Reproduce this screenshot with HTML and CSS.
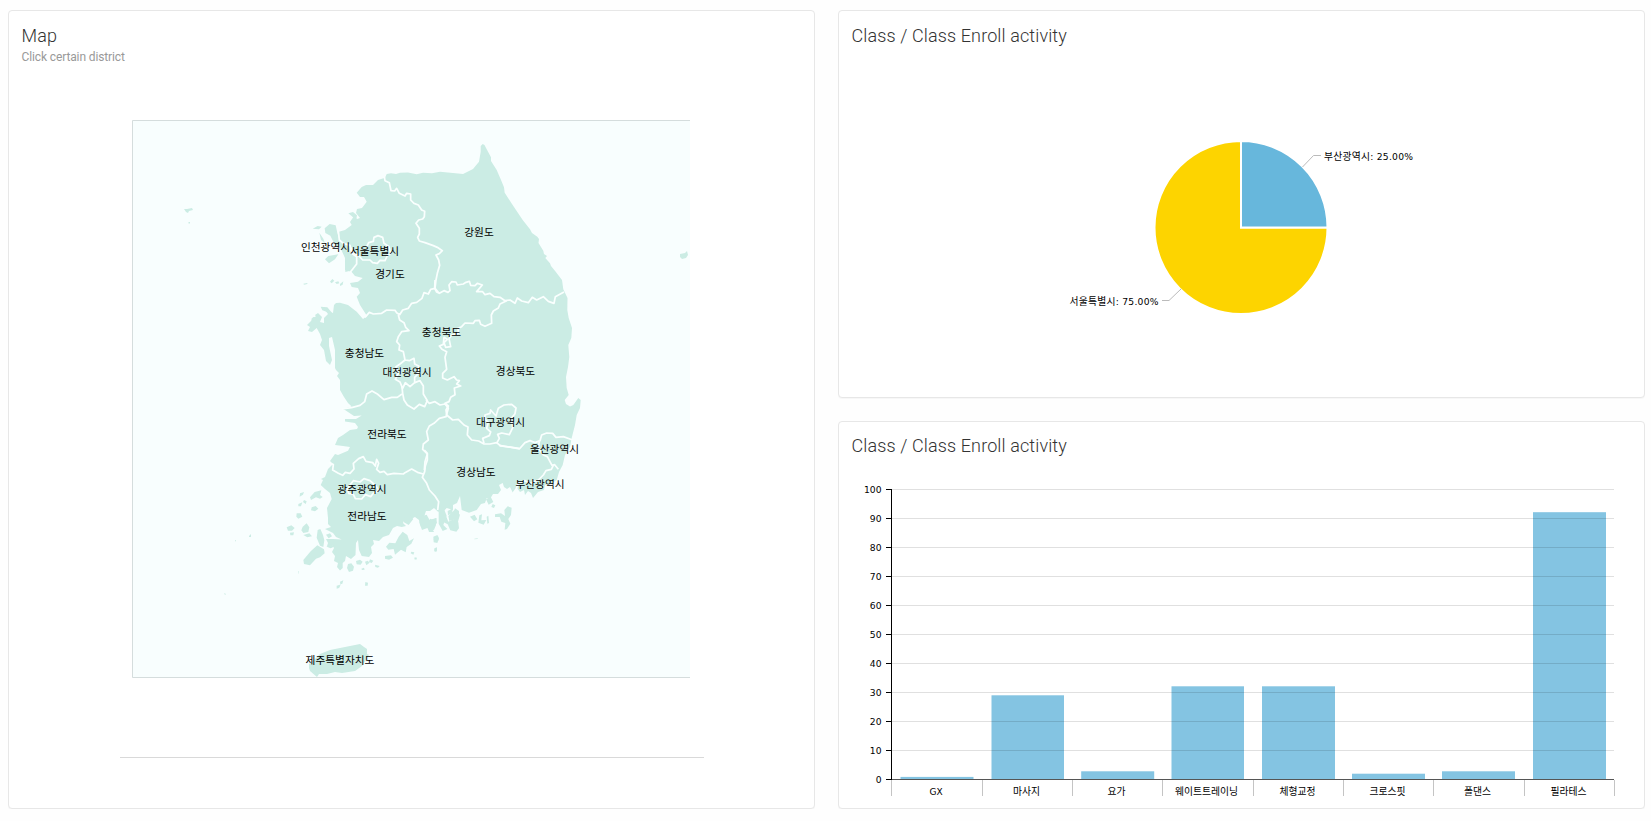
FILE: index.html
```html
<!DOCTYPE html>
<html lang="ko">
<head>
<meta charset="utf-8">
<title>Class activity</title>
<link rel="stylesheet" href="styles.css">
</head>
<body>
<main class="dashboard">
  <section class="card card-map">
    <header class="card-header">
      <h2 class="card-title">Map</h2>
      <p class="card-subtitle">Click certain district</p>
    </header>
    <div class="map-holder">
      <svg class="map" viewBox="132 120 558 558" width="558" height="558">
        <rect class="sea" x="132" y="120" width="558" height="558"/>
        <!-- mainland -->
        <path class="land" d="M482.7 144L484.500 145L486.700 149.300L491 157.300L491 161L496.700 170L500.700 179.300L504 187.300L504.700 192.700L510.700 202L512 204L516 210L522.700 220L530 229.300L532 233L537.300 236.700L539 239L538.500 243L543.300 250.700L544 254L547 256L545.300 258L550 263.300L551 266L555.300 271.300L562 280L563.300 289.300L567.500 298L567.300 310L568.700 318L572 328L571.300 338L568.300 345L569.300 357L568 367L566 377L566.700 388L568.700 395L564.700 400L566 404L570 406.500L573.300 405L578.300 398L580.700 400L580 408L576.700 415L575 425L571.700 438L570 447L565 455L562.700 465L559 472L556.700 480L552 483L545 485L544 490L538 492L533 498L531 493L528 491L525 495L524 490L520 492L517 488L513 493L510 487L507 489L504 487L502.700 483L499 485L501 490L498 494L493 494L490 499L486.700 498L485 503L481 504L476.700 510L469 512.700L461.700 510L460 496L457 503L453 505L453 510L446.700 508L443 512L438 511.700L434 508L430 511L426 511L424 517L430 520L436 518L437 523L432 528L434 532L429 532L427 526L421 527L419 520L415 517L409 520L405 519L403 523L406 526L401.700 527L397 526L393 528L389 535L383 537L379 541L373 540L374 544L371 547L372 553L369 557L361.700 556L359 550L358 540L356 543L355.500 555L351 559L346 556L345 561L342.700 563L342.700 568L340 570.500L337 567L338 563L334 561L335 556L332 552L334 548L332 545L326.700 547L328 543L326 539L333 539L341.700 539.500L336 537L333 533L325 529L331 527L328 524L328 518L327 508L331.700 499L330 493L325 489L320.700 485L323 480L321 479L325 477L328 469L333 464L330 461L335 454L338 455L348 450.700L350 447L343 446L335 445L338 438L343 435L350 430L357 429L358 427L355 423L345 421.500L345 419L356 419L361.700 415.500L354 416L345 410L343 409L351.700 406.500L348 403L344 397L340 390L340 380L337 376L339 373L336 370L335 368L335 350L332 337L329 338L329 346L332 360L330 365L326 361L324 350L320 345L322 340L320 334L316.700 328L312 332L308 331L310 327L307 325L311 321L313 317L317 318L315 315L318 313L322 317L320 322L324 323L324 318L328 314L325 310L333 313L334 305L336 303L340 302.700L348 305L356.700 311.700L363 319L367 316L360 305L356.700 296.700L360 293L358 288L351.700 287L350 283L358 281.700L362.700 278L355 276L351.700 272L345 270L345 258L340 247L338 232L345 230L351.700 225L350 222L354 216L357 219L360 218L356 213L357 209L362 208L366.700 201.700L364 197L360 197L356.700 192.700L361.700 187L366 185L373 185L378 180L385 177.700L386.700 174L391 173.300L396 174L400 172.700L408 172.600L416.700 174.300L423 172.700L432 173.200L440 171.700L453 173L463 174L473 169L479 161.700L480.700 151.700L480.700 146Z"/>
        <!-- Jeju -->
        <path class="land" d="M309 668L309 664L316 658L320 654L330 650L345 647L360 644L364 647L367 649L367 654L369 655L362 666L355 671L342 673L335 672L327 674L319 674L317 677L310 671Z"/>
        <!-- western islands -->
        <path class="land" d="M184 209l3 0 5-1 1 2-4 1-1 2-2-1zM188.500 222l1.500 0 0 1.500-1.500 0zM680 254l5-1 2-2 1 4-2 3-4 1-2-2z"/>
        <g class="land" transform="translate(290 130) scale(.33333)">
          <path d="M68 296l15-8 12 2-8 8zM88 308l12 18 5 14-12-10zM104 295l15-13 18 4 5 22 6 20 3 28-18-15-12-24-15-8zM105 388l10-10 30-5-10 15-18 12zM165 398l3-24 14-22 16 20 4 26-14 22-22 6zM120 455l7-8 6 5-8 8zM135 457l10-3 3 6-8 2zM150 462l10-8-2 10-8 4zM40 461l12-2 0 3-10 2zM92 530l20 2 15 18-10-2-20-7zM63 567l15-8 15 1-5 10-15 2zM175 250l14-4 12 10-2 12-10-6z"/>
        </g>
        <!-- south-western islands -->
        <g class="land" transform="translate(270 430) scale(.33333)">
          <path d="M90 190l12-4-3 8-10 6zM120 202l14-16 20-5-4 14 8 6-8 5-12-4-15 8zM102 210l8 4-3 8-8-6zM85 222l12-5-4 12-8 0zM125 232l12-4 8 8-10 8-12-3zM80 250l12 0 5 10-12 6-6-6zM98 290l12-10 8 12-3 14-15 3-6-8zM50 292l14-6 10 8-8 8-12 0zM100 315l18-5 8 9-14 3zM60 308l12-1-2 9-9 0zM143 300l8-3 8 18 4 16-3 20-10-4-10-24zM168 314l12-4 6 9-10 6zM170 350l14-8 8 8-10 5zM100 390l22-26 20-18 20 12 2 12-14 12-12 4-18 20-18-4zM234 402l10-2 8 10-3 12-12 4-6-12zM258 393l12-4 8 6-6 9-12-1zM285 395l8-3 6 6-10 8zM300 388l10 4-5 7-8-3zM274 416l8-3 2 6-8 1zM315 404l14 4-5 5-8-2zM345 378l18-2 6 7-12 6-12-3zM348 350l10-12 18 2 10-20 12-15 14 10 6 18 14-8-8 16-14 10-3 16-14-8-18 15-4-17-16 2zM424 365l9 2-3 7-8-4zM434 382l7 1-2 6-6-1zM490 320l12-5 5 10-5 14-11-2zM493 355l8-3 0 10-7 2zM210 455l10-4-3 10-6 2zM200 467l10-3-3 10-7 2zM286 456l8 2-1 9-8 0zM402 262l20-5 8 10-14 18-14-8zM450 260l20-6 10 18 20-8-4 24-14 18-10-12-16 6-8-22zM506 245l16-8 8 20-10 28 12 12-14 6-12-22zM535 258l18-18 17 14-8 28-15 5 3-18-12 4zM84 424l2-1-1 8-1 0z"/>
        </g>
        <!-- southern islands -->
        <g class="land" transform="translate(430 400) scale(.33333)">
          <path d="M0 356l12 4 6 14-6 16-12-2zM35 348l12-3 8 20 12-6 18 8 2 18-8 10-18-4-8-18-12-6zM53 333l16-8-3 15-12 6zM75 325l12 8 0 22-10-5-6-14zM14 410l10-3 2 14-12 5-3-8zM13 448l8-2-2 10-6-2zM120 350l14-6 8 14-10 6zM148 346l8-3-2 18 15-1-8 14-16-6zM195 343l18-3 12 8-2-18 10-11 12 4-2 22-8 12 6 14-10 16-7 2 2-20-12-4-5-14-14 0zM168 298l14-8 8 16-14 8zM188 312l8 4-4 8-8-3zM133 416l10-1 0 2-10 1zM170 350l5-3 2 22-5 2z"/>
        </g>
        <path class="land" d="M224 594l1-1 1 2zM249 536l2-2 0 3-2 0zM235 540l1 0 0 2zM337 587l4-3-2 4z"/>
        <!-- province borders, north -->
        <g class="border" transform="translate(290 130) scale(.33333)">
          <path d="M283 140L285 152L298 158L303 182L314 183L320 175L328 190L345 198L350 190L362 192L362 210L372 220L385 225L395 240L404 244L403 260L398 267L386 270L378 280L388 295L388 312L383 322L388 333L405 338L430 347L442 352L457 362L448 371L438 375L446 390L449 406L442 430L438 450L435 475L445 487"/>
          <path d="M435 475L422 478L415 492L402 488L396 505L380 517L365 520L355 535L338 540L329 554L320 548L315 541L290 540L275 550L250 552L238 547L225 562"/>
          <path d="M230 350L236 338L250 334L252 322L264 317L278 322L282 340L297 350L302 370L292 377L285 392L270 391L262 400L248 398L240 390L218 390L207 378L192 370L182 352"/>
          <path d="M145 302L148 330L160 340L180 346L185 370L200 380L200 402L186 420L178 430"/>
        </g>
        <!-- province borders, centre -->
        <g class="border" transform="translate(290 290) scale(.33333)">
          <path d="M325 75L329 90L342 98L347 112L357 122L335 125L325 140L320 155L329 165L327 180L340 185L345 210L330 222L318 230L325 250L316 268L330 276L338 295L346 278L360 290L374 278L374 262L385 250L386 228L374 222L372 205L358 212L345 210"/>
          <path d="M374 278L390 272L400 288L400 312L412 332L404 350L388 343L372 357L352 345L342 330L338 310L336 290"/>
          <path d="M155 357L185 353L210 346L224 335L230 312L246 303L262 312L282 329L305 322L322 322L336 312"/>
          <path d="M408 330L418 340L435 335L450 345L465 342L475 355L468 380L448 385L432 400L418 408L410 425L415 450L400 462L398 478L412 492L405 515L403 540"/>
        </g>
        <!-- province borders, east -->
        <g class="border" transform="translate(430 280) scale(.33333)">
          <path d="M15 0L14 25L20 36L28 40L42 32L54 37L60 32L57 15L65 5L78 6L82 15L100 12L108 7L118 4L122 16L135 17L142 10L157 15L140 35L158 35L165 44L180 40L192 50L210 52L225 62L240 60L255 70L262 54L275 63L295 68L307 52L320 60L340 50L355 64L372 70L376 50L402 36"/>
          <path d="M230 62L210 72L205 84L190 93L184 105L185 130L165 139L152 133L148 121L135 122L130 130L105 129L95 140L84 145L85 160L65 165L57 176L62 200L47 202L42 188L52 178L42 172L40 193L28 198L36 208L50 215L45 232L50 268L38 280L38 294L52 300L72 290L80 300L88 302L80 312L92 318L73 324L75 344L62 352L57 365L45 370L55 378L48 390L50 405L68 420L85 418L102 435L114 441L112 465L125 480L146 483L162 492L180 492L200 488L212 498L245 502L268 505"/>
          <path d="M162 490L158 475L178 467L182 456L170 445L175 427L165 418L165 405L180 400L182 390L198 408L205 385L222 375L245 373L258 384L255 401L244 415L248 443L238 464L215 459L203 463L208 475L200 490"/>
        </g>
        <!-- province borders, south -->
        <g class="border" transform="translate(270 430) scale(.33333)">
          <path d="M176 98L190 104L188 120L205 130L218 136L226 127L240 130L252 117L250 100L266 86L280 80L288 94L308 98L316 108L320 88L326 100L320 118L330 127L342 124L352 134L372 130L400 132L405 128L425 117L445 128L460 132"/>
          <path d="M463 60L472 70L472 90L466 108L464 125L457 142L470 160L478 180L495 198L506 215L503 240"/>
          <path d="M232 178L240 165L250 152L270 156L282 146L300 152L318 168L326 182L310 190L302 200L286 194L275 207L256 206L250 193L236 190Z"/>
        </g>
        <g class="border" transform="translate(430 400) scale(.33333)">
          <path d="M208 136L245 142L268 147L285 128L300 122L315 128L330 122L335 105L350 99L368 100L378 112L400 110L428 120"/>
          <path d="M328 124L325 145L340 165L352 170L360 185L366 196L374 194L385 208M370 196L364 208L348 212L340 225L325 240L300 250L285 242L265 250L258 268L245 285"/>
        </g>
        <g class="map-labels">
          <text x="479" y="236">강원도</text>
          <text x="325.500" y="250.500">인천광역시</text>
          <text x="374.500" y="255">서울특별시</text>
          <text x="390" y="278">경기도</text>
          <text x="441.500" y="336">충청북도</text>
          <text x="364.500" y="357">충청남도</text>
          <text x="407" y="375.500">대전광역시</text>
          <text x="515.500" y="375">경상북도</text>
          <text x="500.500" y="426">대구광역시</text>
          <text x="387" y="438">전라북도</text>
          <text x="554.500" y="453">울산광역시</text>
          <text x="476" y="476">경상남도</text>
          <text x="540" y="488">부산광역시</text>
          <text x="362" y="493">광주광역시</text>
          <text x="367" y="520">전라남도</text>
          <text x="340" y="664">제주특별자치도</text>
        </g>
        <path class="map-frame" d="M690 120.500H132.500V677.500H690"/>
      </svg>
    </div>
    <hr class="divider">
  </section>

  <div class="column">
    <section class="card card-pie">
      <header class="card-header">
        <h2 class="card-title">Class / Class Enroll activity</h2>
      </header>
      <svg class="chart" viewBox="839 70 805 320" width="805" height="320">
        <path class="slice-seoul" d="M1241 227.500V141A86.500 86.500 0 1 0 1327.500 227.500Z"/>
        <path class="slice-busan" d="M1241 227.500V141A86.500 86.500 0 0 1 1327.500 227.500Z"/>
        <path class="leader" d="M1302.500 167L1313.500 155.500H1321M1181 289L1169 300.500H1162"/>
        <g class="chart-text">
          <text x="1324" y="160" textLength="89"><tspan class="region">부산광역시</tspan>: 25.00%</text>
          <text x="1069.500" y="305" textLength="89"><tspan class="region">서울특별시</tspan>: 75.00%</text>
        </g>
      </svg>
    </section>

    <section class="card card-bars">
      <header class="card-header">
        <h2 class="card-title">Class / Class Enroll activity</h2>
      </header>
      <svg class="chart" viewBox="839 480 805 322" width="805" height="322">
        <g class="bar">
          <rect x="900.500" y="776.900" width="73" height="2.600"/>
          <rect x="991.500" y="695.300" width="72.500" height="84.200"/>
          <rect x="1081.200" y="771.300" width="73" height="8.200"/>
          <rect x="1171.500" y="686.300" width="72.500" height="93.200"/>
          <rect x="1262" y="686.300" width="73" height="93.200"/>
          <rect x="1352" y="773.700" width="73" height="5.800"/>
          <rect x="1442" y="771.300" width="73" height="8.200"/>
          <rect x="1533" y="512.200" width="73" height="267.300"/>
        </g>
        <path class="grid" d="M892 489.500H1614M892 518.500H1614M892 547.500H1614M892 576.500H1614M892 605.500H1614M892 634.500H1614M892 663.500H1614M892 692.500H1614M892 721.500H1614M892 750.500H1614"/>
        <path class="category-ticks" d="M891.500 780V796M982.500 780V796M1072.500 780V796M1162.500 780V796M1253.500 780V796M1343.500 780V796M1433.500 780V796M1524.500 780V796M1614.500 780V796"/>
        <path class="base-line" d="M891 779.500H1614"/>
        <path class="value-axis" d="M891.500 489V780M886 489.500H892M886 518.500H892M886 547.500H892M886 576.500H892M886 605.500H892M886 634.500H892M886 663.500H892M886 692.500H892M886 721.500H892M886 750.500H892M886 779.500H892"/>
        <g class="chart-text value-labels">
          <text x="881.500" y="493">100</text>
          <text x="881.500" y="522">90</text>
          <text x="881.500" y="551">80</text>
          <text x="881.500" y="580">70</text>
          <text x="881.500" y="609">60</text>
          <text x="881.500" y="638">50</text>
          <text x="881.500" y="667">40</text>
          <text x="881.500" y="696">30</text>
          <text x="881.500" y="725">20</text>
          <text x="881.500" y="754">10</text>
          <text x="881.500" y="783">0</text>
        </g>
        <g class="chart-text category-labels">
          <text class="latin" x="936" y="795">GX</text>
          <text x="1026.500" y="795">마사지</text>
          <text x="1116.500" y="795">요가</text>
          <text x="1206.500" y="795">웨이트트레이닝</text>
          <text x="1297.500" y="795">체형교정</text>
          <text x="1387.500" y="795">크로스핏</text>
          <text x="1477.500" y="795">폴댄스</text>
          <text x="1568.500" y="795">필라테스</text>
        </g>
      </svg>
    </section>
  </div>
</main>
</body>
</html>
```
FILE: styles.css
```css
* {
  box-sizing: border-box;
}

body {
  margin: 0;
  background: #fefefe;
  font-family: Roboto, "Noto Sans CJK KR", sans-serif;
}

.dashboard {
  display: flex;
  gap: 23px;
  padding: 10px 6px 0 8px;
}

.column {
  display: flex;
  flex-direction: column;
  gap: 23px;
}

.card {
  width: 807px;
  background: #fff;
  border: 1px solid #e7e7e7;
  border-radius: 4px;
  box-shadow: 0 1px 1px rgba(0, 0, 0, 0.03);
  overflow: hidden;
}

.card-map {
  height: 799px;
}

.card-pie,
.card-bars {
  height: 388px;
}

.card-header {
  height: 59px;
  padding: 14px 12.5px 0;
}

.card-bars .card-header {
  height: 58px;
  padding-top: 13px;
}

.card-title {
  margin: 0;
  font-size: 18px;
  line-height: 22px;
  font-weight: 300;
  color: #333;
  letter-spacing: 0.12px;
}

.card-subtitle {
  margin: 2px 0 0;
  font-size: 12px;
  line-height: 16px;
  letter-spacing: -0.12px;
  color: #999;
}

.map-holder {
  padding: 50px 0 0 123px;
}

.map,
.chart {
  display: block;
}

.divider {
  width: 584px;
  height: 1px;
  margin: 79px 0 0 111px;
  border: 0;
  background: #d9d9d9;
}

.sea {
  fill: #f8fefe;
}

.land {
  fill: #cbece4;
}

.border {
  fill: none;
  stroke: #fafffe;
  stroke-width: 5.2;
  stroke-linejoin: round;
}

.map-frame {
  fill: none;
  stroke: #d5dddd;
}

.map-labels {
  font-family: "Noto Sans CJK KR", sans-serif;
  font-size: 10.7px;
  text-anchor: middle;
  fill: #000;
}

.chart-text {
  font-family: "DejaVu Sans", "Noto Sans CJK KR", sans-serif;
  font-size: 9.2px;
  fill: #000;
}

.chart-text .region {
  font-size: 9.8px;
}

.slice-seoul,
.slice-busan {
  fill: #fdd400;
  stroke: #fff;
  stroke-width: 2;
}

.slice-busan {
  fill: #67b7dc;
}

.leader {
  fill: none;
  stroke: #bbb;
}

.bar {
  fill: #84c4e2;
}

.grid {
  stroke: rgba(0, 0, 0, 0.12);
}

.category-ticks {
  stroke: #c4c4c4;
}

.base-line {
  stroke: #555;
}

.value-axis {
  fill: none;
  stroke: #000;
}

.value-labels {
  text-anchor: end;
}

.category-labels {
  text-anchor: middle;
  font-size: 9.8px;
}

.category-labels .latin {
  font-size: 9px;
}
```
